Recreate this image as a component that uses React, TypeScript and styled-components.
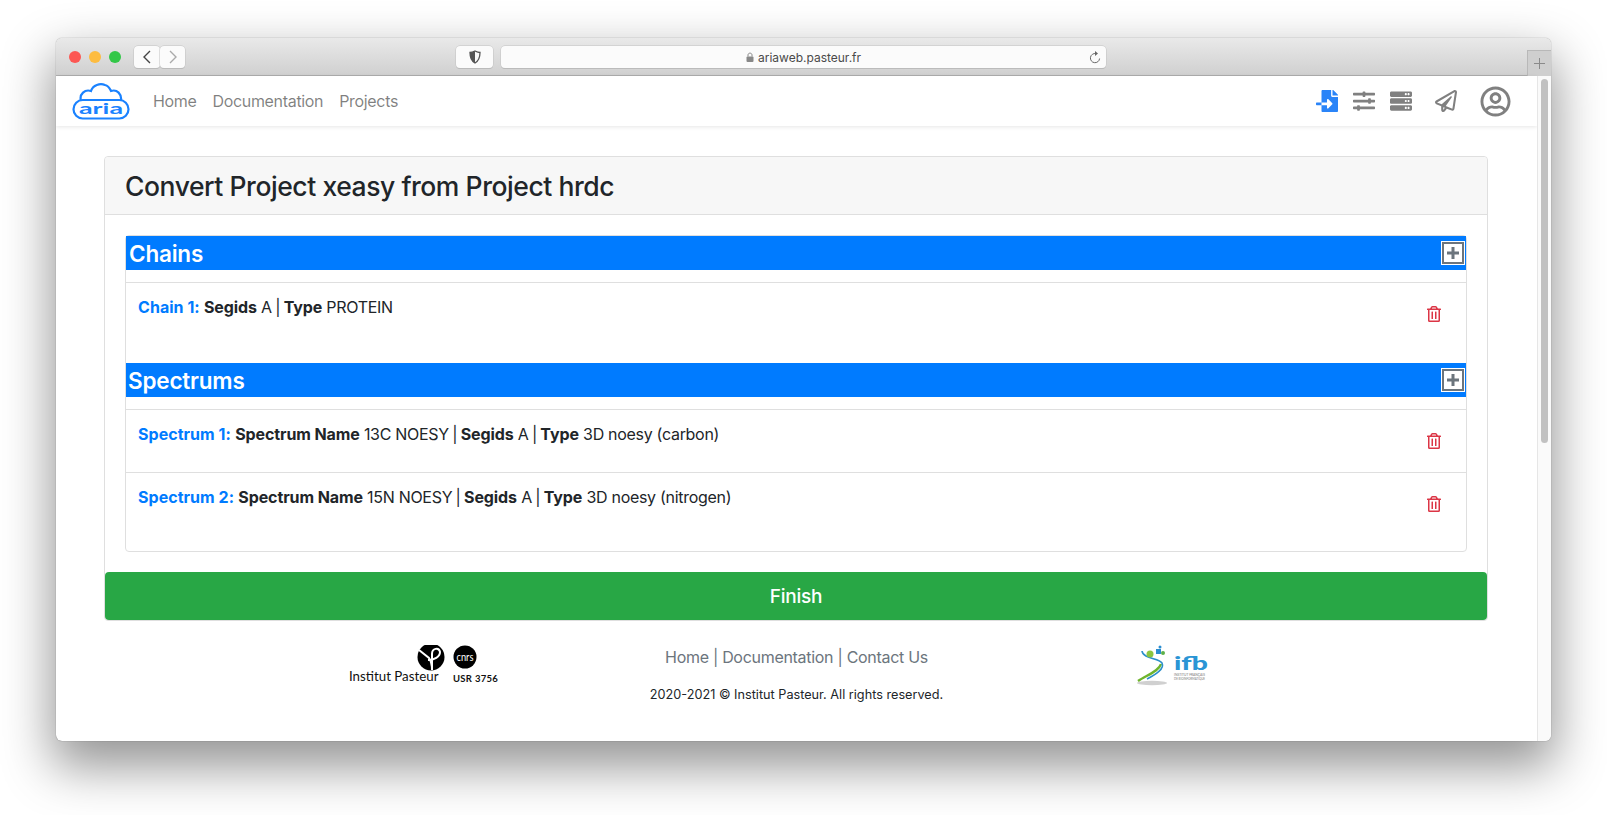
import React from 'react'
import styled, { createGlobalStyle } from 'styled-components'
import { FaFileImport, FaRegPaperPlane, FaRegTrashAlt, FaRegUserCircle, FaServer, FaSlidersH } from 'react-icons/fa'

const GlobalStyle = createGlobalStyle`
  html, body {
    margin: 0;
    background: #fff;
    overflow: hidden;
  }
  body {
    font-family: Inter, "Liberation Sans", sans-serif;
    color: #212529;
  }
`

const Desktop = styled.div`
  height: 815px;
  box-sizing: border-box;
  padding: 38px 56px 74px;
`

const Window = styled.div`
  width: 1495px;
  height: 703px;
  display: flex;
  flex-direction: column;
  border-radius: 6px;
  overflow: hidden;
  background: #fff;
  box-shadow: 0 22px 50px 4px rgba(0, 0, 0, 0.42), 0 0 1px rgba(0, 0, 0, 0.6);
`

const TitleBar = styled.div`
  height: 38px;
  flex: none;
  box-sizing: border-box;
  display: flex;
  align-items: flex-start;
  padding: 8px 0 0 13px;
  background: linear-gradient(#e9e9e9, #d0d0d0);
  border-bottom: 1px solid #aeaeae;
`

const Light = styled.span<{ $color: string }>`
  width: 12px;
  height: 12px;
  margin: 5px 8px 0 0;
  border-radius: 50%;
  background: ${(p) => p.$color};
`

const ToolButton = styled.div<{ $width: number; $gap?: number }>`
  width: ${(p) => p.$width}px;
  height: 22px;
  margin-left: ${(p) => p.$gap ?? 0}px;
  box-sizing: border-box;
  display: flex;
  align-items: center;
  justify-content: center;
  background: #fbfbfb;
  border-radius: 4px;
  box-shadow: 0 0 0 0.5px #c2c2c2, 0 1px 0 #b5b5b5;
  color: #555;
`

const AddressBar = styled(ToolButton)`
  position: relative;
  font-size: 12px;
  color: #4a4a4a;
  gap: 4px;
`

const ReloadIcon = styled.svg`
  position: absolute;
  right: 5px;
  top: 5px;
`

const NewTab = styled.div`
  width: 24px;
  height: 26px;
  margin: 4px 0 0 auto;
  box-sizing: border-box;
  display: flex;
  align-items: center;
  justify-content: center;
  background: #cfcfcf;
  border-left: 1px solid #b8b8b8;
  border-top: 1px solid #b8b8b8;
  color: #8a8a8a;
`

const Viewport = styled.div`
  flex: 1;
  display: flex;
  min-height: 0;
`

const Page = styled.div`
  flex: 1;
  display: flex;
  flex-direction: column;
  min-width: 0;
`

const ScrollTrack = styled.div`
  width: 14px;
  flex: none;
  box-sizing: border-box;
  padding: 3px 3px 0;
  background: #fafafa;
  border-left: 1px solid #e6e6e6;
`

const ScrollThumb = styled.div`
  height: 364px;
  border-radius: 4px;
  background: #c1c1c1;
`

const NavBar = styled.nav`
  height: 50px;
  flex: none;
  display: flex;
  align-items: center;
  padding-left: 16px;
  box-shadow: 0 1px 4px rgba(0, 0, 0, 0.1);
`

const NavLinks = styled.div`
  display: flex;
  gap: 16px;
  margin-left: 23px;
`

const NavLink = styled.a`
  font-size: 16px;
  color: rgba(0, 0, 0, 0.5);
  letter-spacing: -0.33px;
`

const NavIcons = styled.div`
  margin-left: auto;
  margin-right: 26px;
  display: flex;
  align-items: center;
  color: #808080;
`

const NavIcon = styled.span<{ $color?: string; $left: number; $size: number }>`
  display: flex;
  margin-left: ${(p) => p.$left}px;
  font-size: ${(p) => p.$size}px;
  color: ${(p) => p.$color ?? 'inherit'};
`

const Card = styled.section`
  margin: 30px 49px 0 48px;
  border: 1px solid #dfdfdf;
  border-radius: 4px;
  background: #fff;
`

const CardHeader = styled.header`
  height: 58px;
  box-sizing: border-box;
  display: flex;
  align-items: center;
  padding: 1px 0 0 20px;
  background: #f7f7f7;
  border-bottom: 1px solid #dfdfdf;
  border-radius: 4px 4px 0 0;
`

const Title = styled.h2`
  margin: 0;
  font-size: 26.5px;
  font-weight: 500;
  letter-spacing: -0.44px;
`

const CardBody = styled.div`
  padding: 20px 20px 20px;
`

const ListGroup = styled.div`
  border: 1px solid #dfdfdf;
  border-radius: 4px;
`

const SectionBar = styled.div<{ $inset: number }>`
  height: 34px;
  display: flex;
  align-items: center;
  justify-content: space-between;
  padding: 0 1px 0 ${(p) => p.$inset}px;
  background: #007bff;
  color: #fff;
  font-size: 22.5px;
  font-weight: 600;
  letter-spacing: -0.2px;
`

const AddButton = styled.button`
  width: 22px;
  height: 22px;
  padding: 0;
  display: flex;
  align-items: center;
  justify-content: center;
  background: #fff;
  border: 2px solid #6c757d;
  box-shadow: 0 0 0 1px #fff;
  margin-right: 1px;
`

const Item = styled.div<{ $bottom: number }>`
  display: flex;
  justify-content: space-between;
  align-items: flex-start;
  padding: 12px 24px ${(p) => p.$bottom}px 12px;
  border-top: 1px solid #dfdfdf;
  font-size: 16px;
  line-height: 24px;
  letter-spacing: -0.3px;
`

const Gap = styled.div`
  height: 12px;
`

const Label = styled.b`
  color: #007bff;
  font-weight: 700;
  letter-spacing: 0.04px;
`

const Key = styled.b`
  font-weight: 700;
  letter-spacing: -0.1px;
`

const Sep = styled.span`
  margin: 0 -0.8px;
`

const TrashButton = styled.span`
  height: 38px;
  display: flex;
  align-items: center;
  color: #dc3545;
  font-size: 16px;
`

const FinishButton = styled.button`
  display: block;
  width: 100%;
  height: 48px;
  border: 0;
  border-radius: 4px;
  background: #28a745;
  color: #fff;
  font: 500 19px Inter, "Liberation Sans", sans-serif;
  letter-spacing: -0.2px;
`

const Footer = styled.footer`
  flex: 1;
  display: grid;
  grid-template-columns: 1fr 1fr 1fr;
  padding-top: 24px;
`

const LogoCell = styled.div<{ $left: number }>`
  padding-left: ${(p) => p.$left}px;
`

const FooterCenter = styled.div`
  display: flex;
  flex-direction: column;
  align-items: center;
`

const FooterLinks = styled.div`
  font-size: 16px;
  line-height: 24px;
  color: #6c757d;
  letter-spacing: -0.3px;
`

const Copyright = styled.div`
  margin-top: 17px;
  font-size: 12.7px;
  line-height: 18px;
  color: #212529;
`

const AriaLogo = () => (
  <svg width="58" height="37" viewBox="0 0 58 37">
    <path
      d="M9 18 C7 11 13 6 19 8 C21 2 28 0 33 2 C37 3 38 6 39 8 C45 6 50 11 49 18"
      fill="none"
      stroke="#1a82ff"
      strokeWidth="2.2"
      strokeLinecap="round"
    />
    <rect x="1.5" y="17" width="55" height="18.5" rx="9.2" fill="#fff" stroke="#1a82ff" strokeWidth="2.2" />
    <text
      x="7"
      y="31"
      textLength="44"
      lengthAdjust="spacingAndGlyphs"
      fontFamily="Lato, sans-serif"
      fontSize="16"
      fontWeight="700"
      fill="#1a82ff"
    >
      aria
    </text>
  </svg>
)

const PasteurLogo = () => (
  <svg width="152" height="42" viewBox="0 0 152 42">
    <circle cx="83" cy="12" r="13.5" fill="#000" />
    <path d="M71 5 L81 13 C83 16 84 20 84 25 M84 25 V9 C84 3 91 2 92 7 C92 12 86 15 80 15" fill="none" stroke="#fff" strokeWidth="2" />
    <circle cx="117" cy="12" r="11.5" fill="#000" />
    <text x="108.5" y="16" textLength="17" lengthAdjust="spacingAndGlyphs" fontFamily="Lato, sans-serif" fontSize="12" fill="#fff">
      cnrs
    </text>
    <text x="1" y="36" fontFamily="Lato, sans-serif" fontSize="13.3" fill="#111">
      Institut Pasteur
    </text>
    <text x="105" y="36.5" fontFamily="Lato, sans-serif" fontSize="9.5" fontWeight="700" fill="#111" letterSpacing="0.3">
      USR 3756
    </text>
  </svg>
)

const IfbLogo = () => (
  <svg width="80" height="42" viewBox="0 0 80 42">
    <ellipse cx="17" cy="38" rx="15" ry="2.2" fill="#d0d0d0" />
    <path d="M3 36 C12 30 24 26 26 19" fill="none" stroke="#6fb42c" strokeWidth="2.4" />
    <path d="M12 34 C20 30 30 24 27 18 C24 13 8 14 7 6" fill="none" stroke="#2b8fc9" strokeWidth="1.6" />
    <circle cx="15" cy="9" r="3.5" fill="#8cc63f" />
    <rect x="21" y="4" width="5" height="5" fill="#2a8dd0" />
    <circle cx="28" cy="8" r="2" fill="#5db04a" />
    <circle cx="25" cy="2" r="1.5" fill="#2a8dd0" />
    <text x="39" y="25" textLength="34" lengthAdjust="spacingAndGlyphs" fontFamily="Lato, sans-serif" fontSize="19" fontWeight="900" fill="#2a95d5">
      ifb
    </text>
    <text x="39" y="31" textLength="31" lengthAdjust="spacingAndGlyphs" fontFamily="Lato, sans-serif" fontSize="3" fill="#777">
      INSTITUT FRANÇAIS
    </text>
    <text x="39" y="35" textLength="31" lengthAdjust="spacingAndGlyphs" fontFamily="Lato, sans-serif" fontSize="3" fill="#777">
      DE BIOINFORMATIQUE
    </text>
  </svg>
)

const Plus = () => (
  <svg width="14" height="14" viewBox="0 0 14 14">
    <path d="M7 1 V13 M1 7 H13" stroke="#6c757d" strokeWidth="3" />
  </svg>
)

const App: React.FC = () => {
  return (
    <Desktop>
      <GlobalStyle />
      <Window>
        <TitleBar>
          <Light $color="#fc5753" />
          <Light $color="#fdbc40" />
          <Light $color="#33c748" />
          <ToolButton $width={26} $gap={5}>
            <svg width="10" height="14" viewBox="0 0 10 14">
              <path d="M8 1 L2 7 L8 13" fill="none" stroke="#444" strokeWidth="1.4" />
            </svg>
          </ToolButton>
          <ToolButton $width={25}>
            <svg width="10" height="14" viewBox="0 0 10 14">
              <path d="M2 1 L8 7 L2 13" fill="none" stroke="#aaa" strokeWidth="1.4" />
            </svg>
          </ToolButton>
          <ToolButton $width={37} $gap={271}>
            <svg width="12" height="14" viewBox="0 0 12 14">
              <path d="M6 1 C8 2 10 2.5 11 2.5 C11 8 9.5 11 6 13 C2.5 11 1 8 1 2.5 C2 2.5 4 2 6 1 Z" fill="none" stroke="#555" strokeWidth="1.3" />
              <path d="M6 1 C4 2 2 2.5 1 2.5 C1 8 2.5 11 6 13 Z" fill="#555" />
            </svg>
          </ToolButton>
          <AddressBar $width={605} $gap={8}>
            <svg width="8" height="10" viewBox="0 0 8 10">
              <path d="M2 4.5 V3 C2 0.5 6 0.5 6 3 V4.5" fill="none" stroke="#888" strokeWidth="1" />
              <rect x="0.5" y="4.5" width="7" height="5.5" rx="1" fill="#888" />
            </svg>
            ariaweb.pasteur.fr
            <ReloadIcon width="12" height="13" viewBox="0 0 12 13">
              <path d="M7 2.6 A4.6 4.6 0 1 0 10.6 7.5" fill="none" stroke="#666" strokeWidth="1" />
              <path d="M6 0 L9 2.6 L6 5 Z" fill="#666" />
            </ReloadIcon>
          </AddressBar>
          <NewTab>
            <svg width="11" height="11" viewBox="0 0 11 11">
              <path d="M5.5 0 V11 M0 5.5 H11" stroke="#8a8a8a" strokeWidth="1" />
            </svg>
          </NewTab>
        </TitleBar>
        <Viewport>
          <Page>
            <NavBar>
              <AriaLogo />
              <NavLinks>
                <NavLink>Home</NavLink>
                <NavLink>Documentation</NavLink>
                <NavLink>Projects</NavLink>
              </NavLinks>
              <NavIcons>
                <NavIcon $color="#2a84f8" $left={0} $size={22}>
                  <FaFileImport />
                </NavIcon>
                <NavIcon $left={15} $size={22}>
                  <FaSlidersH />
                </NavIcon>
                <NavIcon $left={15} $size={22}>
                  <FaServer />
                </NavIcon>
                <NavIcon $left={23} $size={22}>
                  <FaRegPaperPlane />
                </NavIcon>
                <NavIcon $left={23} $size={31}>
                  <FaRegUserCircle />
                </NavIcon>
              </NavIcons>
            </NavBar>
            <Card>
              <CardHeader>
                <Title>Convert Project xeasy from Project hrdc</Title>
              </CardHeader>
              <CardBody>
                <ListGroup>
                  <SectionBar $inset={3}>
                    Chains
                    <AddButton>
                      <Plus />
                    </AddButton>
                  </SectionBar>
                  <Gap />
                  <Item $bottom={30}>
                    <span>
                      <Label>Chain 1:</Label> <Key>Segids</Key> A <Sep>|</Sep> <Key>Type</Key> PROTEIN
                    </span>
                    <TrashButton>
                      <FaRegTrashAlt />
                    </TrashButton>
                  </Item>
                  <SectionBar $inset={2}>
                    Spectrums
                    <AddButton>
                      <Plus />
                    </AddButton>
                  </SectionBar>
                  <Gap />
                  <Item $bottom={12}>
                    <span>
                      <Label>Spectrum 1:</Label> <Key>Spectrum Name</Key> 13C NOESY <Sep>|</Sep> <Key>Segids</Key> A <Sep>|</Sep> <Key>Type</Key> 3D noesy (carbon)
                    </span>
                    <TrashButton>
                      <FaRegTrashAlt />
                    </TrashButton>
                  </Item>
                  <Item $bottom={28}>
                    <span>
                      <Label>Spectrum 2:</Label> <Key>Spectrum Name</Key> 15N NOESY <Sep>|</Sep> <Key>Segids</Key> A <Sep>|</Sep> <Key>Type</Key> 3D noesy (nitrogen)
                    </span>
                    <TrashButton>
                      <FaRegTrashAlt />
                    </TrashButton>
                  </Item>
                </ListGroup>
              </CardBody>
              <FinishButton>Finish</FinishButton>
            </Card>
            <Footer>
              <LogoCell $left={292}>
                <PasteurLogo />
              </LogoCell>
              <FooterCenter>
                <FooterLinks>Home | Documentation | Contact Us</FooterLinks>
                <Copyright>2020-2021 © Institut Pasteur. All rights reserved.</Copyright>
              </FooterCenter>
              <LogoCell $left={92}>
                <IfbLogo />
              </LogoCell>
            </Footer>
          </Page>
          <ScrollTrack>
            <ScrollThumb />
          </ScrollTrack>
        </Viewport>
      </Window>
    </Desktop>
  )
}

export default App
